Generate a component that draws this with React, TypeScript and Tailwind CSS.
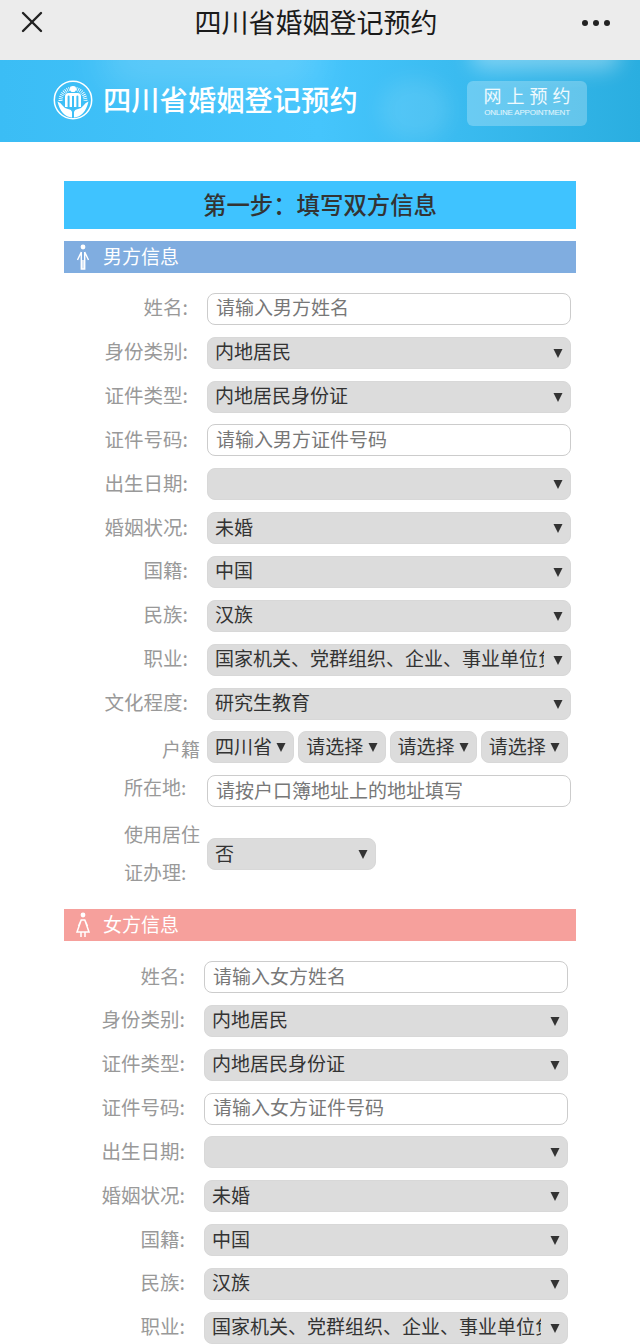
import { X } from "lucide-react"

const cjk = "font-['Noto_Sans_CJK_SC','Noto_Sans',sans-serif]"

function Caret() {
  return (
    <svg viewBox="0 0 10 10" className="w-[10px] h-[10px] shrink-0 fill-[#333]">
      <path d="M0.500 1h9L5 10z" />
    </svg>
  )
}

function Label({ children, w }: { children: React.ReactNode; w: string }) {
  return <div className={`${w} shrink-0 text-right text-[#999] text-[19.5px] leading-[26px] pr-[19px] pb-[3px] whitespace-nowrap`}>{children}</div>
}

function TextBox({ text }: { text: string }) {
  return (
    <div className="h-[32px] flex-1 rounded-[8px] border border-[#ccc] bg-white pl-[8px] pb-[3px] flex items-center text-[#777] text-[19px] leading-[26px] whitespace-nowrap">
      {text}
    </div>
  )
}

function Select({ text, compact }: { text?: string; compact?: boolean }) {
  return (
    <div className="h-[32px] flex-1 min-w-0 rounded-[8px] bg-[#dcdcdc] border border-[#d8d8d8] pl-[7px] pr-[7px] flex items-center text-[#333] text-[19px] leading-[26px]">
      <span className={compact ? "overflow-hidden whitespace-nowrap flex-1 min-w-0 mr-[3px] pb-[3px] h-[29px]" : "overflow-hidden whitespace-nowrap flex-1 min-w-0 mr-[9px] pb-[3px] h-[29px]"}>{text}</span>
      <Caret />
    </div>
  )
}

type Field = { label: string; text?: string; input?: boolean }

function Row({ field, labelW }: { field: Field; labelW: string }) {
  return (
    <div className="h-[43.85px] flex items-center">
      <Label w={labelW}>{field.label}</Label>
      {field.input ? <TextBox text={field.text ?? ""} /> : <Select text={field.text} />}
    </div>
  )
}

function MaleIcon() {
  return (
    <svg viewBox="0 0 14 26" className="w-[14px] h-[26px] fill-none stroke-white stroke-[1.4]">
      <circle cx="7" cy="3" r="2.400" fill="white" stroke="none" />
      <path d="M5.300 8v17h3.400V8M5.300 8 1.500 16M8.700 8l3.800 8M7 16v9" />
    </svg>
  )
}

function FemaleIcon() {
  return (
    <svg viewBox="0 0 16 26" className="w-[16px] h-[26px] fill-none stroke-white stroke-[1.5]">
      <circle cx="8" cy="3" r="2.400" fill="white" stroke="none" />
      <path d="M6.200 8 2 20h12L9.800 8zM6 20v5M10 20v5M6.200 8 3.500 14M9.800 8l2.700 6" />
    </svg>
  )
}

function Logo() {
  return (
    <svg viewBox="0 0 40 40" className="w-[40px] h-[40px]">
      <circle cx="20" cy="20" r="18.700" fill="none" stroke="white" strokeWidth="1.500" />
      <path d="M7.500 21a12.500 12.500 0 0 1 25 0" fill="none" stroke="white" strokeWidth="4" strokeDasharray="0.800 1.100" />
      <circle cx="20" cy="9" r="3.100" fill="white" />
      <path d="M12 27V16.500q0-3.500 3.500-3.500h9q3.500 0 3.500 3.500V27h-2.600V16.500q0-1-1-1T23.400 16.500V27h-2.400V16h-2V27h-2.400V16.500q0-1-1-1t-1 1V27z" fill="white" />
      <path d="M4.500 21.500q3 1 5 4t5.500 3.500q3.500.5 4 3v5.500Q8 36.500 4.500 21.500zM35.500 21.500q-3 1-5 4t-5.500 3.500q-3.500.5-4 3v5.500Q32 36.500 35.500 21.500z" fill="white" />
    </svg>
  )
}

const male: Field[] = [
  { label: "姓名:", text: "请输入男方姓名", input: true },
  { label: "身份类别:", text: "内地居民" },
  { label: "证件类型:", text: "内地居民身份证" },
  { label: "证件号码:", text: "请输入男方证件号码", input: true },
  { label: "出生日期:" },
  { label: "婚姻状况:", text: "未婚" },
  { label: "国籍:", text: "中国" },
  { label: "民族:", text: "汉族" },
  { label: "职业:", text: "国家机关、党群组织、企业、事业单位负责人" },
  { label: "文化程度:", text: "研究生教育" },
]

const female: Field[] = [
  { label: "姓名:", text: "请输入女方姓名", input: true },
  { label: "身份类别:", text: "内地居民" },
  { label: "证件类型:", text: "内地居民身份证" },
  { label: "证件号码:", text: "请输入女方证件号码", input: true },
  { label: "出生日期:" },
  { label: "婚姻状况:", text: "未婚" },
  { label: "国籍:", text: "中国" },
  { label: "民族:", text: "汉族" },
  { label: "职业:", text: "国家机关、党群组织、企业、事业单位负责人" },
]

export default function App() {
  return (
    <div className={`w-[640px] h-[1344px] overflow-hidden bg-white ${cjk}`}>
      <div className="h-[60px] bg-[#ececec] relative flex justify-center pr-[8px] pt-[3px]">
        <X className="absolute left-[14px] top-[4px] w-[36px] h-[36px] text-[#222]" strokeWidth={1.6} />
        <div className="text-[27px] leading-[38px] text-[#1a1a1a]">四川省婚姻登记预约</div>
        <div className="absolute right-[30px] top-[20px] flex gap-[5px]">
          <span className="w-[6px] h-[6px] rounded-full bg-[#222]" />
          <span className="w-[6px] h-[6px] rounded-full bg-[#222]" />
          <span className="w-[6px] h-[6px] rounded-full bg-[#222]" />
        </div>
      </div>

      <div className="h-[82px] relative overflow-hidden bg-gradient-to-r from-[#3bbdf5] via-[#45c5fc] to-[#2aaee0] flex items-center pl-[53px]">
        {/* clouds behind the banner */}
        <div className="absolute left-[100px] top-[-30px] w-[220px] h-[60px] rounded-full bg-white/15 blur-[18px]" />
        <div className="absolute left-[470px] top-[-20px] w-[150px] h-[30px] rounded-full bg-white/35 blur-[10px]" />
        <div className="absolute left-[380px] top-[20px] w-[70px] h-[60px] rounded-full bg-white/10 blur-[10px]" />
        <div className="relative flex items-center pb-[2px]">
          <Logo />
          <div className="ml-[10px] text-white text-[28.300px] font-medium leading-[36px] pb-[3px] whitespace-nowrap">四川省婚姻登记预约</div>
        </div>
        <div className="absolute left-[467px] top-[21px] w-[120px] h-[45px] rounded-[6px] bg-white/25 flex flex-col items-center pt-[2px]">
          <div className="text-white/90 text-[18px] leading-[24px] tracking-[5px] pl-[5px] whitespace-nowrap">网上预约</div>
          <div className="text-white/85 text-[8px] leading-[12px] tracking-[-0.2px] font-['Liberation_Sans',sans-serif] whitespace-nowrap">ONLINE APPOINTMENT</div>
        </div>
      </div>

      <div className="mx-[64px] mt-[39px] h-[48px] bg-[#3fc3ff] flex items-center justify-center pb-[3px] text-[23.400px] font-medium leading-[32px] text-[#333]">
        {"第一步\uFF1A填写双方信息"}
      </div>

      <div className="mx-[64px] mt-[12px] h-[32px] bg-[#80ade0] flex items-center pl-[12px] text-white text-[19px] leading-[26px]">
        <MaleIcon />
        <span className="ml-[13px] pb-[2px]">男方信息</span>
      </div>

      <div className="pl-[64px] pr-[69px] mt-[14px]">
        {male.map((f) => (
          <Row key={f.label} field={f} labelW="w-[143px]" />
        ))}

        <div className="h-[43.85px] flex items-center">
          <div className="w-[143px] shrink-0 text-right text-[#999] text-[19px] leading-[26px] pr-[7px] pt-[4px]">户籍</div>
          <div className="flex-1 min-w-0 flex gap-[4px] pr-[3px]">
            <Select compact text="四川省" />
            <Select compact text="请选择" />
            <Select compact text="请选择" />
            <Select compact text="请选择" />
          </div>
        </div>

        <div className="h-[43.85px] flex items-center">
          <div className="w-[143px] shrink-0 text-[#999] text-[19px] leading-[26px] pl-[60px] pb-[9px]">所在地:</div>
          <TextBox text="请按户口簿地址上的地址填写" />
        </div>

        <div className="flex items-center mt-[2px]">
          <div className="w-[143px] shrink-0 text-[#999] text-[19px] leading-[38px] pl-[60px] pb-[2px] whitespace-nowrap">
            使用居住<br />证办理:
          </div>
          <div className="w-[169px] flex">
            <Select text="否" />
          </div>
        </div>
      </div>

      <div className="mx-[64px] mt-[16px] h-[32px] bg-[#f6a09c] flex items-center pl-[11px] text-white text-[19px] leading-[26px]">
        <FemaleIcon />
        <span className="ml-[12px] pb-[2px]">女方信息</span>
      </div>

      <div className="pl-[64px] pr-[72px] mt-[14px]">
        {female.map((f) => (
          <Row key={f.label} field={f} labelW="w-[140px]" />
        ))}
      </div>
    </div>
  )
}
